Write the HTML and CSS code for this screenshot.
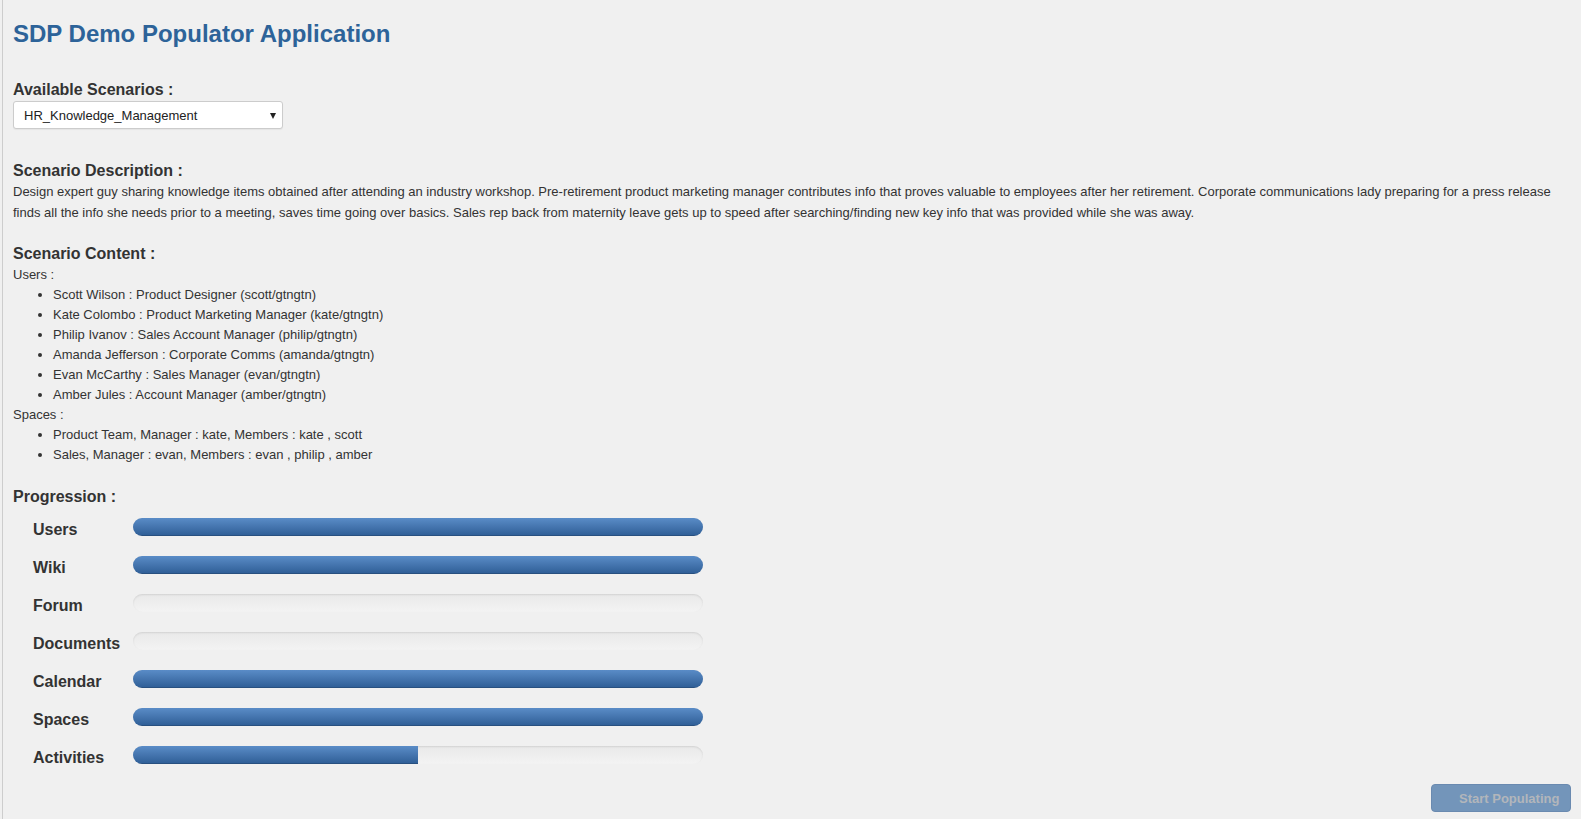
FILE: index.html
```html
<!DOCTYPE html>
<html lang="en">
<head>
<meta charset="utf-8">
<title>SDP Demo Populator Application</title>
<link rel="stylesheet" href="styles.css">
</head>
<body>
<div class="page">
  <h1 class="title">SDP Demo Populator Application</h1>

  <h4 class="section first">Available Scenarios :</h4>
  <div class="select-wrap">
    <select class="select">
      <option>HR_Knowledge_Management</option>
    </select>
    <span class="caret"></span>
  </div>

  <h4 class="section desc-head">Scenario Description :</h4>
  <p class="desc">Design expert guy sharing knowledge items obtained after attending an industry workshop. Pre-retirement product marketing manager contributes info that proves valuable to employees after her retirement. Corporate communications lady preparing for a press release finds all the info she needs prior to a meeting, saves time going over basics. Sales rep back from maternity leave gets up to speed after searching/finding new key info that was provided while she was away.</p>

  <h4 class="section content-head">Scenario Content :</h4>
  <div class="content">
    <div class="line">Users :</div>
    <ul class="list">
      <li>Scott Wilson : Product Designer (scott/gtngtn)</li>
      <li>Kate Colombo : Product Marketing Manager (kate/gtngtn)</li>
      <li>Philip Ivanov : Sales Account Manager (philip/gtngtn)</li>
      <li>Amanda Jefferson : Corporate Comms (amanda/gtngtn)</li>
      <li>Evan McCarthy : Sales Manager (evan/gtngtn)</li>
      <li>Amber Jules : Account Manager (amber/gtngtn)</li>
    </ul>
    <div class="line">Spaces :</div>
    <ul class="list">
      <li>Product Team, Manager : kate, Members : kate , scott</li>
      <li>Sales, Manager : evan, Members : evan , philip , amber</li>
    </ul>
  </div>

  <h4 class="section prog-head">Progression :</h4>
  <div class="progress-table">
    <div class="prow"><div class="plabel">Users</div><div class="progress"><div class="bar" style="width:100%"></div></div></div>
    <div class="prow"><div class="plabel">Wiki</div><div class="progress"><div class="bar" style="width:100%"></div></div></div>
    <div class="prow"><div class="plabel">Forum</div><div class="progress"><div class="bar" style="width:0%"></div></div></div>
    <div class="prow"><div class="plabel">Documents</div><div class="progress"><div class="bar" style="width:0%"></div></div></div>
    <div class="prow"><div class="plabel">Calendar</div><div class="progress"><div class="bar" style="width:100%"></div></div></div>
    <div class="prow"><div class="plabel">Spaces</div><div class="progress"><div class="bar" style="width:100%"></div></div></div>
    <div class="prow"><div class="plabel">Activities</div><div class="progress"><div class="bar" style="width:50%"></div></div></div>
  </div>

  <div class="actions">
    <button class="btn" disabled>Start Populating</button>
  </div>
</div>
</body>
</html>
```
FILE: styles.css
```css
html, body {
  margin: 0;
  padding: 0;
  background: #f0f0f0;
}

body {
  font-family: "Liberation Sans", Arial, Helvetica, sans-serif;
  font-size: 13px;
  line-height: 20px;
  color: #333333;
}

.page {
  margin-left: 2px;
  border-left: 1px solid #cdcdcd;
  padding: 14px 10px 7px 10px;
  min-height: 100vh;
  box-sizing: border-box;
}

.title {
  margin: 0;
  font-size: 24px;
  line-height: 40px;
  font-weight: bold;
  color: #2d6399;
}

.section {
  margin: 22px 0 0 0;
  font-size: 16px;
  line-height: 20px;
  font-weight: bold;
  color: #333333;
}

.section.first {
  margin-top: 26px;
  margin-bottom: 1px;
}

.section.desc-head {
  margin-top: 32px;
}

.section.content-head {
  margin-top: 21px;
}

.section.prog-head {
  margin-top: 22px;
}

.select-wrap {
  position: relative;
  width: 270px;
  height: 28px;
}

.select {
  -webkit-appearance: none;
  appearance: none;
  display: block;
  width: 270px;
  height: 28px;
  margin: 0;
  padding: 0 24px 0 10px;
  box-sizing: border-box;
  border: 1px solid #cccccc;
  border-radius: 3px;
  background: #ffffff;
  font-family: "Liberation Sans", Arial, Helvetica, sans-serif;
  font-size: 13px;
  color: #222222;
  box-shadow: 0 1px 1px rgba(0, 0, 0, 0.05);
}

.caret {
  position: absolute;
  right: 7px;
  top: 12px;
  width: 0;
  height: 0;
  border-left: 3px solid transparent;
  border-right: 3px solid transparent;
  border-top: 6px solid #222222;
  pointer-events: none;
}

.desc {
  margin: 0;
  line-height: 21px;
}

.content {
  padding-top: 1px;
}

.content .line {
  line-height: 20px;
}

.list {
  margin: 0;
  padding-left: 40px;
}

.list li {
  line-height: 20px;
}

.progress-table {
  margin-top: 11px;
  padding-left: 20px;
}

.prow {
  display: flex;
  align-items: flex-start;
  margin-bottom: 17px;
}

.plabel {
  width: 100px;
  flex: none;
  padding-top: 3px;
  font-size: 16px;
  line-height: 18px;
  font-weight: bold;
  color: #333333;
}

.progress {
  width: 570px;
  height: 18px;
  border-radius: 9px;
  overflow: hidden;
  background: linear-gradient(to bottom, #e9e9e9, #f3f3f3);
  box-shadow: inset 0 1px 2px rgba(0, 0, 0, 0.1);
}

.bar {
  height: 100%;
  background: linear-gradient(to bottom, #5a8cc7, #2e5d95);
  box-shadow: inset 0 -1px 0 rgba(0, 0, 0, 0.15);
}

.actions {
  display: flex;
  justify-content: flex-end;
}

.btn {
  height: 28px;
  width: 140px;
  margin: 0;
  padding: 0 12px 0 27px;
  box-sizing: border-box;
  border: 1px solid #6a8ab0;
  border-radius: 4px;
  background: #7395ba;
  color: #b2b6bb;
  font-family: "Liberation Sans", Arial, Helvetica, sans-serif;
  font-size: 13px;
  font-weight: bold;
  text-align: left;
  white-space: nowrap;
  cursor: default;
}
```
